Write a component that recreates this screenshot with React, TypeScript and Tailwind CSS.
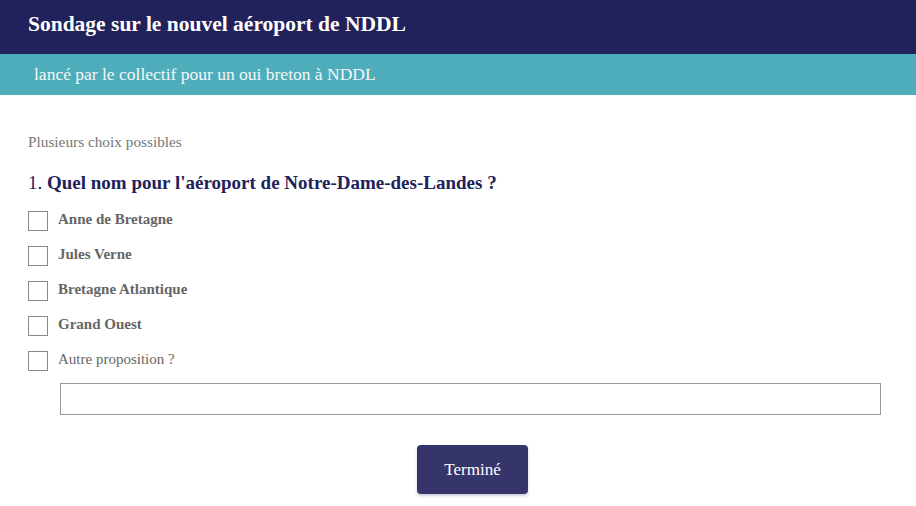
import React from "react";

const serif = { fontFamily: '"Liberation Serif", "Times New Roman", serif' };

const options = [
  { label: "Anne de Bretagne", bold: true },
  { label: "Jules Verne", bold: true },
  { label: "Bretagne Atlantique", bold: true },
  { label: "Grand Ouest", bold: true },
  { label: "Autre proposition ?", bold: false },
];

export default function App() {
  return (
    <div className="w-[916px] h-[506px] bg-white overflow-hidden" style={serif}>
      <div className="h-[54px] bg-[#21225c] flex items-center px-[28px] pb-[5px]">
        <h1 className="text-[21.5px] font-bold text-white leading-none">
          Sondage sur le nouvel aéroport de NDDL
        </h1>
      </div>
      <div className="h-[41px] bg-[#4eadba] flex items-center px-[34px]">
        <p className="text-[17.5px] text-[#f3f7f8] leading-none">
          lancé par le collectif pour un oui breton à NDDL
        </p>
      </div>
      <div className="px-[28px] pt-[38px]">
        <p className="text-[15.3px] text-[#777] leading-[18px]">Plusieurs choix possibles</p>
        <h2 className="mt-[21px] text-[19px] text-[#21225c] leading-[22px]">
          1. <span className="font-bold">Quel nom pour l'aéroport de Notre-Dame-des-Landes ?</span>
        </h2>
        <div className="mt-[17px] flex flex-col gap-[15px]">
          {options.map((o) => (
            <label key={o.label} className="flex items-center gap-[10px] h-[20px]">
              <span className="w-[20px] h-[20px] border border-[#8a8a8a] bg-white shrink-0" />
              <span
                className={`text-[15px] text-[#666] leading-none -mt-[3px] ${o.bold ? "font-bold" : ""}`}
              >
                {o.label}
              </span>
            </label>
          ))}
        </div>
        <div className="mt-[12px] pl-[32px] pr-[7px]">
          <input
            type="text"
            className="w-full h-[32px] border border-[#999] bg-white outline-none px-2 text-[14px]"
          />
        </div>
        <div className="mt-[30px] flex justify-center pl-[29px]">
          <button
            className="w-[111px] h-[49px] rounded-[4px] bg-[#35356b] text-white text-[17px] shadow-[0_2px_3px_rgba(60,60,120,0.25)]"
            style={serif}
          >
            Terminé
          </button>
        </div>
      </div>
    </div>
  );
}
